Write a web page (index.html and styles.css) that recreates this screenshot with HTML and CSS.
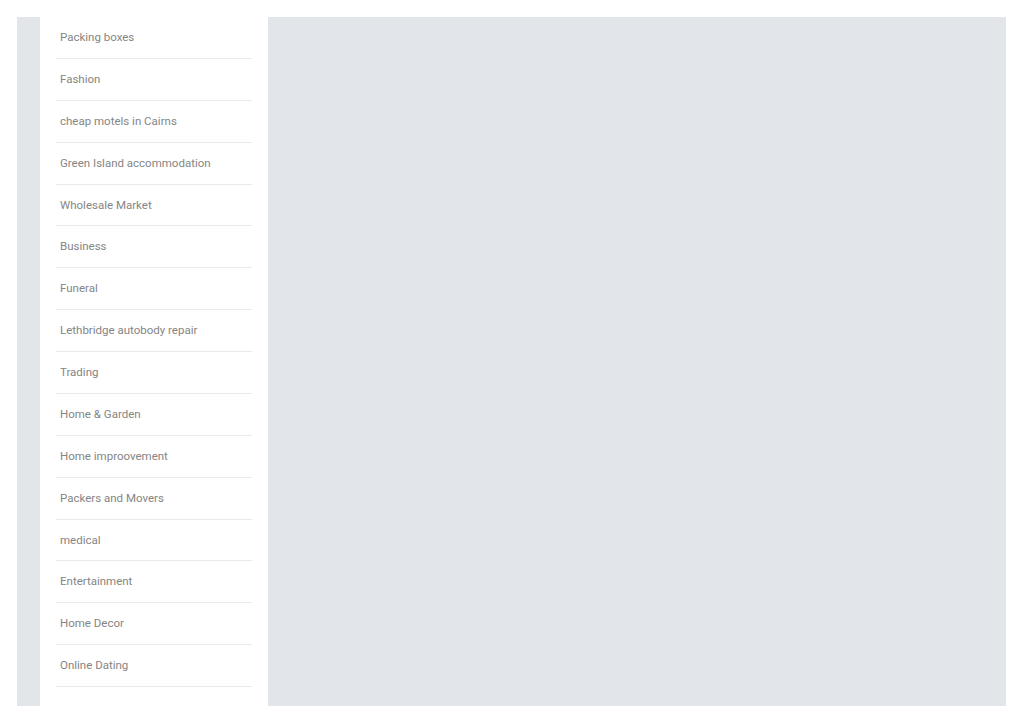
FILE: index.html
```html
<!DOCTYPE html>
<html>
<head>
<meta charset="utf-8">
<link rel="stylesheet" href="styles.css">
</head>
<body>
<div class="page">
  <aside class="sidebar">
    <ul class="links">
      <li>Packing boxes</li>
      <li>Fashion</li>
      <li>cheap motels in Cairns</li>
      <li>Green Island accommodation</li>
      <li>Wholesale Market</li>
      <li>Business</li>
      <li>Funeral</li>
      <li>Lethbridge autobody repair</li>
      <li>Trading</li>
      <li>Home &amp; Garden</li>
      <li>Home improovement</li>
      <li>Packers and Movers</li>
      <li>medical</li>
      <li>Entertainment</li>
      <li>Home Decor</li>
      <li>Online Dating</li>
    </ul>
  </aside>
  <main class="content"></main>
</div>
</body>
</html>
```
FILE: styles.css
```css
html, body {
  margin: 0;
  padding: 0;
  background: #ffffff;
}
body {
  padding: 17px 18px 17px 17px;
  font-family: Roboto, "Liberation Sans", sans-serif;
}
.page {
  display: flex;
  height: 689px;
  background: #e2e5e9;
  padding-left: 23px;
}
.sidebar {
  width: 228px;
  flex: none;
  background: #ffffff;
  padding: 0 16px;
  box-sizing: border-box;
}
.links {
  list-style: none;
  margin: 0;
  padding: 0;
}
.links li {
  padding: 12px 4px 12px 4px;
  line-height: 16.87px;
  font-size: 11.5px;
  font-weight: 400;
  color: #858585;
  border-bottom: 1px solid #e9e9e9;
}
.content {
  flex: 1;
}
```
